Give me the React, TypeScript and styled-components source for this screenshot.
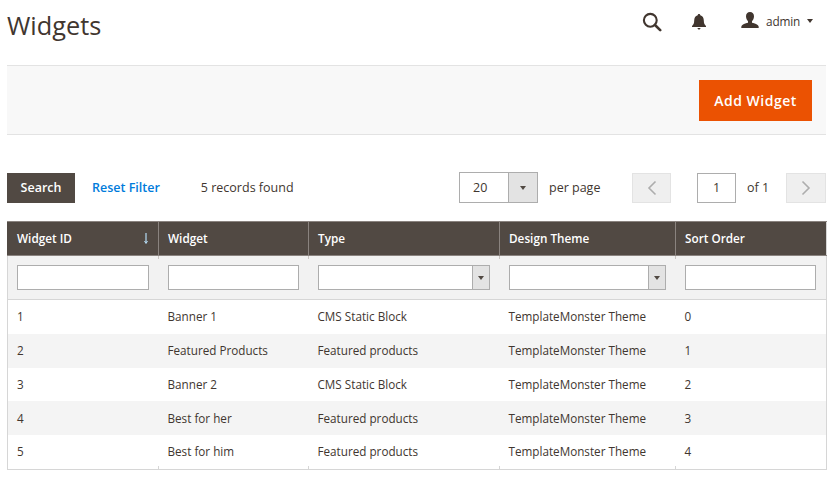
import React from "react";
import styled, { createGlobalStyle } from "styled-components";

const Global = createGlobalStyle`
  html, body { margin: 0; padding: 0; background: #fff; }
  body { font-family: "Open Sans", "Liberation Sans", sans-serif; color: #41362f; font-size: 12px; overflow: hidden; }
  * { box-sizing: border-box; }
`;

const Page = styled.div`
  width: 839px;
  height: 482px;
  padding: 0 13px 0 7px;
`;

const Header = styled.header`
  height: 65px;
  display: flex;
  align-items: flex-start;
  justify-content: space-between;
`;

const Title = styled.h1`
  margin: 5px 0 0;
  font-size: 25.3px;
  line-height: 40px;
  font-weight: 400;
  color: #41362f;
`;

const HeaderTools = styled.div`
  display: flex;
  align-items: center;
  height: 44px;
  color: #41362f;
  margin-right: 13px;
`;

const ToolIcon = styled.svg<{ $mr: number }>`
  display: block;
  margin-right: ${(p) => p.$mr}px;
`;

const UserMenu = styled.div`
  display: flex;
  align-items: center;
  margin-bottom: 2px;
`;

const UserName = styled.span`
  font-size: 11.8px;
  letter-spacing: -0.2px;
  margin-left: 7px;
  color: #41362f;
`;

const Caret = styled.span`
  width: 0;
  height: 0;
  margin-left: 7px;
  border-left: 3px solid transparent;
  border-right: 3px solid transparent;
  border-top: 4px solid #41362f;
`;

const ActionBar = styled.div`
  height: 70px;
  background: #f8f8f8;
  border-top: 1px solid #e3e3e3;
  border-bottom: 1px solid #e3e3e3;
  display: flex;
  align-items: center;
  justify-content: flex-end;
  padding-right: 14px;
`;

const PrimaryButton = styled.button`
  width: 113px;
  height: 41px;
  border: 0;
  background: #eb5202;
  color: #fff;
  font: 600 14px "Open Sans", sans-serif;
  letter-spacing: 0.5px;
  padding: 0;
`;

const Controls = styled.div`
  margin-top: 37px;
  height: 31px;
  display: flex;
  align-items: center;
`;

const SearchButton = styled.button`
  width: 68px;
  height: 30px;
  border: 0;
  background: #514943;
  color: #fff;
  font: 600 12.5px "Open Sans", sans-serif;
  padding: 0;
`;

const ResetLink = styled.a`
  margin-left: 17px;
  color: #007bdb;
  font-weight: 600;
  font-size: 12.5px;
`;

const Records = styled.span`
  margin-left: 41px;
  font-size: 12.5px;
  color: #41362f;
`;

const Spacer = styled.div`
  flex: 1;
`;

const PerPageSelect = styled.div`
  width: 79px;
  height: 31px;
  display: flex;
  border: 1px solid #adadad;
  background: #fff;
`;

const PerPageValue = styled.span`
  width: 48px;
  line-height: 29px;
  padding-left: 13px;
  font-size: 12.5px;
`;

const ArrowBox = styled.span<{ $w: number }>`
  width: ${(p) => p.$w}px;
  flex: none;
  background: #e3e3e3;
  border-left: 1px solid #adadad;
  display: flex;
  align-items: center;
  justify-content: center;
  &::after {
    content: "";
    border-left: 3.5px solid transparent;
    border-right: 3.5px solid transparent;
    border-top: 4.5px solid #514943;
  }
`;

const PerPageLabel = styled.span`
  margin-left: 11px;
  width: 83px;
  font-size: 12.5px;
`;

const PageButton = styled.button<{ $w: number }>`
  width: ${(p) => p.$w}px;
  height: 30px;
  background: #efefef;
  border: 1px solid #e3e3e3;
  padding: 0;
  display: flex;
  align-items: center;
  justify-content: center;
  color: #adadad;
`;

const PageInput = styled.div`
  margin-left: 26px;
  width: 39px;
  height: 30px;
  border: 1px solid #adadad;
  background: #fff;
  text-align: center;
  line-height: 28px;
  font-size: 12.5px;
`;

const OfLabel = styled.span`
  margin-left: 11px;
  width: 39px;
  font-size: 12.5px;
`;

const Table = styled.table`
  margin-top: 18px;
  width: 819px;
  table-layout: fixed;
  border-collapse: collapse;
  font-size: 11.7px;
  border-bottom: 1px solid #d6d6d6;
  border-left: 1px solid #d6d6d6;
  border-right: 1px solid #d6d6d6;
`;

const Th = styled.th`
  height: 34px;
  background: #514943;
  color: #fff;
  font-weight: 600;
  font-size: 11.75px;
  text-align: left;
  padding: 0 9px 2px;
  border-left: 1px solid #8a837f;
  border-top: 1px solid #8a837f;
  border-bottom: 1px solid #8a837f;
  position: relative;
  &:first-child { border-left: 1px solid #514943; }
  &:not(:first-child)::after {
    content: "";
    position: absolute;
    left: -1px;
    bottom: -4px;
    width: 1px;
    height: 3px;
    background: #c9c5c2;
  }
`;

const SortArrow = styled.svg`
  position: absolute;
  right: 9px;
  top: 11px;
  display: block;
`;

const FilterCell = styled.td`
  height: 44px;
  background: #f2f2f2;
  padding: 0 10px 0 9px;
  border-bottom: 1px solid #d6d6d6;
`;

const FilterInput = styled.div`
  height: 25px;
  background: #fff;
  border: 1px solid #adadad;
  display: flex;
  justify-content: flex-end;
`;

const Row = styled.tr<{ $alt: boolean; $h: number }>`
  height: ${(p) => p.$h}px;
  background: ${(p) => (p.$alt ? "#f4f4f4" : "#fff")};
`;

const Td = styled.td<{ $tick: boolean; $pb: number }>`
  padding: 0 9px ${(p) => p.$pb}px;
  color: #41362f;
  font-size: 11.7px;
  position: relative;
  &::after {
    content: "";
    display: ${(p) => (p.$tick ? "block" : "none")};
    position: absolute;
    left: -1px;
    bottom: 0;
    width: 1px;
    height: 3px;
    background: #d6d6d6;
  }
`;

const columns = [151, 150, 191, 176, 151];
const headers = ["Widget ID", "Widget", "Type", "Design Theme", "Sort Order"];
const rows = [
  ["1", "Banner 1", "CMS Static Block", "TemplateMonster Theme", "0"],
  ["2", "Featured Products", "Featured products", "TemplateMonster Theme", "1"],
  ["3", "Banner 2", "CMS Static Block", "TemplateMonster Theme", "2"],
  ["4", "Best for her", "Featured products", "TemplateMonster Theme", "3"],
  ["5", "Best for him", "Featured products", "TemplateMonster Theme", "4"],
];
const rowHeights = [34, 34, 33, 34, 35];
const rowBottomPad = [2, 2, 0, 0, 2];

export default function App() {
  return (
    <Page>
      <Global />
      <Header>
        <Title>Widgets</Title>
        <HeaderTools>
          <ToolIcon $mr={29} width="20" height="20" viewBox="0 0 20 20" fill="none" stroke="#41362f">
            <circle cx="8.3" cy="8.3" r="6.4" strokeWidth="2.1" />
            <path d="M13 13l5.2 5.2" strokeWidth="2.6" strokeLinecap="round" />
          </ToolIcon>
          <ToolIcon $mr={34} width="16" height="18" viewBox="0 0 16 18" fill="#41362f">
            <path d="M8 1c.8 0 1.2.5 1.3 1.2C11.600 2.800 12.800 4.700 12.800 7.500c0 3 .9 4.300 2.200 5.500v1H1v-1c1.300-1.200 2.200-2.500 2.200-5.500 0-2.800 1.200-4.700 3.500-5.300C6.800 1.500 7.200 1 8 1z" />
            <path d="M6.500 15h3c0 .9-.7 1.500-1.500 1.500S6.500 15.900 6.500 15z" />
          </ToolIcon>
          <UserMenu>
            <ToolIcon $mr={0} width="18" height="18" viewBox="0 0 18 18" fill="#41362f">
              <path d="M9 0c2.500 0 4 1.700 4 4.200 0 2.100-1 4-2 5v1.600c2.600.7 6 1.800 6.500 3.200.2.500.2 1.500.2 2H.3c0-.5 0-1.500.2-2C1 12.600 4.400 11.500 7 10.800V9.200c-1-1-2-2.900-2-5C5 1.700 6.500 0 9 0z" />
            </ToolIcon>
            <UserName>admin</UserName>
            <Caret />
          </UserMenu>
        </HeaderTools>
      </Header>
      <ActionBar>
        <PrimaryButton>Add Widget</PrimaryButton>
      </ActionBar>
      <Controls>
        <SearchButton>Search</SearchButton>
        <ResetLink>Reset Filter</ResetLink>
        <Records>5 records found</Records>
        <Spacer />
        <PerPageSelect>
          <PerPageValue>20</PerPageValue>
          <ArrowBox $w={29} />
        </PerPageSelect>
        <PerPageLabel>per page</PerPageLabel>
        <PageButton $w={39} aria-label="Previous">
          <svg width="10" height="16" viewBox="0 0 10 16" fill="none" stroke="currentColor" strokeWidth="1.6">
            <path d="M8.500 1.500L2 8l6.500 6.500" />
          </svg>
        </PageButton>
        <PageInput>1</PageInput>
        <OfLabel>of 1</OfLabel>
        <PageButton $w={40} aria-label="Next">
          <svg width="10" height="16" viewBox="0 0 10 16" fill="none" stroke="currentColor" strokeWidth="1.6">
            <path d="M1.500 1.500L8 8l-6.500 6.500" />
          </svg>
        </PageButton>
      </Controls>
      <Table>
        <colgroup>
          {columns.map((w, i) => (
            <col key={i} width={w} />
          ))}
        </colgroup>
        <thead>
          <tr>
            {headers.map((h, i) => (
              <Th key={h}>
                {h}
                {i === 0 && (
                  <SortArrow width="6" height="11" viewBox="0 0 6 11" fill="none" stroke="#b5dcf6">
                    <path d="M3 0v10" strokeWidth="1.200" />
                    <path d="M1.500 8L3 10.500L4.500 8" strokeWidth="1" />
                  </SortArrow>
                )}
              </Th>
            ))}
          </tr>
          <tr>
            {headers.map((h, i) => (
              <FilterCell key={h}>
                <FilterInput>{(i === 2 || i === 3) && <ArrowBox $w={17} />}</FilterInput>
              </FilterCell>
            ))}
          </tr>
        </thead>
        <tbody>
          {rows.map((r, i) => (
            <Row key={r[0]} $alt={i % 2 === 1} $h={rowHeights[i]}>
              {r.map((c, j) => (
                <Td key={j} $pb={rowBottomPad[i]} $tick={i === rows.length - 1 && j > 0}>
                  {c}
                </Td>
              ))}
            </Row>
          ))}
        </tbody>
      </Table>
    </Page>
  );
}
